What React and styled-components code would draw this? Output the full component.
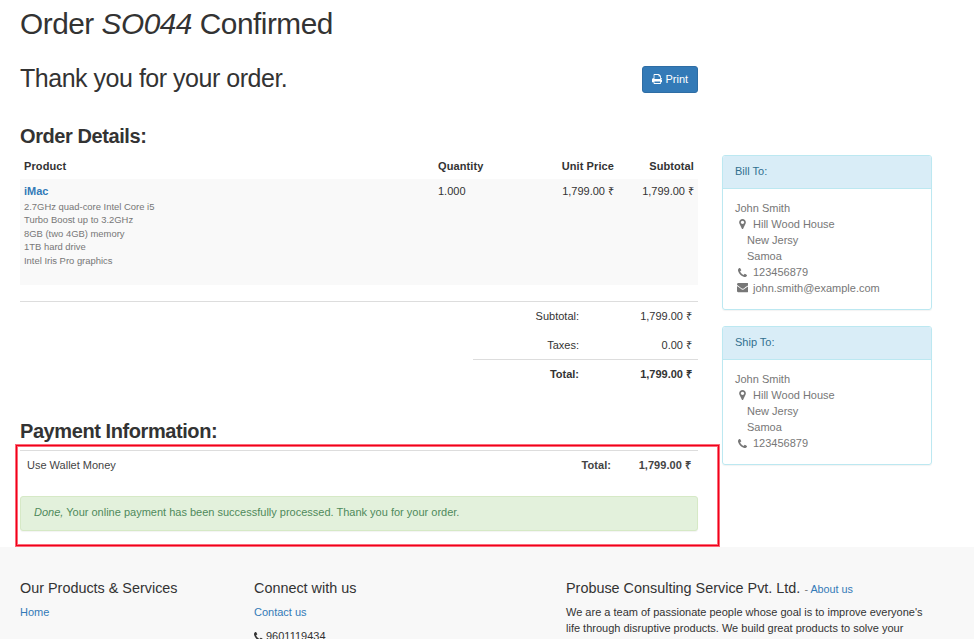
import React from "react";
import styled, { createGlobalStyle } from "styled-components";

const GlobalStyle = createGlobalStyle`
  * { box-sizing: border-box; }
  html, body { margin: 0; padding: 0; height: 639px; overflow: hidden; background: #fff; }
  body {
    font: 11px/16px "Liberation Sans", Arial, sans-serif;
    color: #333;
  }
  h1, h2, h3, h4, p, address { margin: 0; font-style: normal; }
  a { color: #337ab7; text-decoration: none; }
`;

const Page = styled.div`
  position: relative;
  width: 974px;
  height: 639px;
  overflow: hidden;
  display: flex;
  flex-direction: column;
`;

const Content = styled.main`
  height: 547px;
  flex: none;
  padding: 0 42px 0 20px;
`;

const Title = styled.h1`
  height: 48px;
  font-size: 29.8px;
  letter-spacing: -0.48px;
  line-height: 48px;
  font-weight: 400;
  white-space: nowrap;
`;

const Columns = styled.div`
  display: grid;
  grid-template-columns: 678px 210px;
  column-gap: 24px;
`;

const Thanks = styled.div`
  display: flex;
  justify-content: space-between;
  height: 75px;
  padding-top: 18px;
`;

const ThanksText = styled.h2`
  font-size: 25px;
  letter-spacing: -0.48px;
  line-height: 25px;
  font-weight: 400;
`;

const PrintButton = styled.button`
  display: flex;
  align-items: center;
  justify-content: center;
  gap: 3px;
  width: 56px;
  height: 27px;
  padding: 0 0 1px;
  border: 1px solid #2e6da4;
  border-radius: 3px;
  background: #337ab7;
  color: #fff;
  font: inherit;
`;

const SectionTitle = styled.h3`
  height: 26px;
  font-size: 20px;
  letter-spacing: -0.42px;
  line-height: 26px;
  font-weight: 700;
`;

const OrderTable = styled.div`
  margin-top: 4px;
`;

const OrderRow = styled.div`
  display: grid;
  grid-template-columns: 414px 80px 104px 80px;
  height: ${(p) => (p.$head ? 26 : 106)}px;
  padding-top: ${(p) => (p.$head ? 5 : 4)}px;
  background: ${(p) => (p.$head ? "transparent" : "#f9f9f9")};
  font-weight: ${(p) => (p.$head ? 700 : 400)};
  letter-spacing: ${(p) => (p.$head ? 0.1 : 0)}px;
`;

const Cell = styled.div`
  padding: 0 4px;
  text-align: ${(p) => (p.$right ? "right" : "left")};
`;

const ProductName = styled.a`
  display: block;
  font-weight: 700;
`;

const Specs = styled.div`
  color: #777;
  font-size: 9.44px;
  line-height: 13.6px;
  padding-top: 0.5px;
`;

const Totals = styled.div`
  margin-top: 16px;
  border-top: 1px solid #ddd;
  display: flex;
  flex-direction: column;
  align-items: flex-end;
  height: 117px;
`;

const TotalRow = styled.div`
  display: grid;
  grid-template-columns: 106px 113px;
  width: 225px;
  padding-right: 6px;
  height: ${(p) => p.$height || 29}px;
  line-height: 28px;
  text-align: right;
  border-top: ${(p) => (p.$sum ? "1px solid #ddd" : "0")};
  font-weight: ${(p) => (p.$sum ? 700 : 400)};
`;

const Payment = styled.div`
  display: grid;
  grid-template-columns: 1fr 100px 80px;
  margin-top: 6px;
  height: 46px;
  padding: 0 7px;
  border-top: 1px solid #ddd;
  line-height: 29px;
  color: #444;
`;

const Amount = styled.strong`
  text-align: right;
  letter-spacing: 0.05px;
`;

const Alert = styled.div`
  height: 35px;
  padding: 0 13px;
  border: 1px solid #d6e9c6;
  border-radius: 3px;
  background: #e3f1dc;
  color: #4f8a5b;
  line-height: 31px;
  box-shadow: 0 1px 1px rgba(0, 0, 0, 0.05);
`;

const Sidebar = styled.aside`
  padding-top: 107px;
  display: flex;
  flex-direction: column;
  gap: 16px;
`;

const Panel = styled.section`
  height: ${(p) => p.$height}px;
  border: 1px solid #bce8f1;
  border-radius: 3px;
  box-shadow: 0 1px 1px rgba(0, 0, 0, 0.05);
  overflow: hidden;
`;

const PanelHeading = styled.div`
  height: 33px;
  padding-left: 12px;
  background: #d9edf7;
  border-bottom: 1px solid #bce8f1;
  color: #31708f;
  line-height: 31px;
`;

const PanelBody = styled.address`
  padding: 11px 12px;
  color: #777;
`;

const AddressLine = styled.div`
  display: flex;
  align-items: center;
  height: 16px;
  padding-left: ${(p) => p.$indent || 0}px;
`;

const IconSlot = styled.span`
  display: flex;
  align-items: center;
  justify-content: center;
  width: 15px;
  margin-right: 3px;
`;

const Svg = styled.svg`
  display: block;
  flex: none;
  fill: currentColor;
`;

const Highlight = styled.div`
  position: absolute;
  left: 15px;
  top: 444px;
  width: 705px;
  height: 103px;
  border: 3px solid #fb6a78;
  &::after {
    content: "";
    position: absolute;
    inset: -2px;
    border: 1px solid #f0001a;
  }
`;

const Footer = styled.footer`
  flex: 1;
  display: grid;
  grid-template-columns: 234px 312px 366px;
  padding: 32px 20px 0;
  background: #f8f8f8;
`;

const FooterTitle = styled.h4`
  height: 25px;
  font-size: 14.4px;
  line-height: 18px;
  font-weight: 400;
  white-space: nowrap;
`;

const Small = styled.small`
  font-size: 10.8px;
  color: #777;
`;

const Phone = styled.div`
  display: flex;
  align-items: center;
  gap: 3px;
  margin-top: 8px;
`;

const Blurb = styled.p`
  white-space: nowrap;
`;

const icons = {
  phone: {
    box: "0 128 1408 1408",
    w: 9,
    h: 9,
    d: "M1408 1240q0 27-10 70.5t-21 68.5q-21 50-122 106-94 51-186 51-27 0-53-3.5t-57-12.5-47-14.5-55.5-20.5-49.5-18q-98-35-175-83-127-79-264-216t-216-264q-48-77-83-175-3-9-18-49.5t-20.5-55.5-14.5-47-12.5-57-3.5-53q0-92 51-186 56-101 106-122 25-11 68.5-21t70.5-10q14 0 21 3 18 6 53 76 11 19 30 54t35 63.5 31 53.5q3 4 17.5 25t21.5 35.5 7 28.5q0 20-28.5 50t-62 55-62 53-28.5 46q0 9 5 22.5t8.5 20.5 14 24 11.5 19q76 137 174 235t235 174q2 1 19 11.5t24 14 20.5 8.5 22.5 5q18 0 46-28.5t53-62 55-62 50-28.5q14 0 28.5 7t35.5 21.5 25 17.5q25 15 53.5 31t63.5 35 54 30q70 35 76 53 3 7 3 21z",
  },
  marker: {
    box: "384 128 1024 1536",
    w: 7,
    h: 10,
    d: "M1152 640q0-106-75-181t-181-75-181 75-75 181 75 181 181 75 181-75 75-181zm256 0q0 109-33 179l-364 774q-16 33-47.5 52t-67.5 19-67.5-19-46.5-52l-365-774q-33-70-33-179 0-212 150-362t362-150 362 150 150 362z",
  },
  envelope: {
    box: "0 256 1792 1408",
    w: 11.6,
    h: 9.2,
    d: "M1792 710v794q0 66-47 113t-113 47h-1472q-66 0-113-47t-47-113v-794q44 49 101 87 362 246 497 345 57 42 92.5 65.5t94.5 48 110 24.5h2q51 0 110-24.5t94.5-48 92.5-65.5q170-123 498-345 57-39 100-87zm0-294q0 79-49 151t-122 123q-376 261-468 325-10 7-42.5 31t-54 38.5-52 32.5-57.5 27-50 9h-2q-23 0-50-9t-57.5-27-52-32.5-54-38.5-42.5-31q-91-64-262-182.5t-205-142.5q-62-42-117-115.5t-55-136.5q0-78 41.5-130t118.5-52h1472q65 0 112.5 47t47.5 113z",
  },
  print: {
    box: "64 128 1664 1536",
    w: 10.6,
    h: 10,
    d: "M448 1536h896v-256h-896v256zm0-640h896v-384h-160q-40 0-68-28t-28-68v-160h-640v640zm1152 64q0-26-19-45t-45-19-45 19-19 45 19 45 45 19 45-19 19-45zm128 0v416q0 13-9.5 22.5t-22.5 9.5h-224v160q0 40-28 68t-68 28h-960q-40 0-68-28t-28-68v-160h-224q-13 0-22.5-9.5t-9.5-22.5v-416q0-79 56.5-135.5t135.5-56.5h64v-544q0-40 28-68t68-28h672q40 0 88 20t76 48l152 152q28 28 48 76t20 88v256h64q79 0 135.5 56.5t56.5 135.5z",
  },
};

function Icon({ name }) {
  const i = icons[name];
  return (
    <Svg width={i.w} height={i.h} viewBox={i.box} aria-hidden="true">
      <path d={i.d} />
    </Svg>
  );
}

function ContactLine({ icon, children }) {
  return (
    <AddressLine>
      <IconSlot><Icon name={icon} /></IconSlot>
      {children}
    </AddressLine>
  );
}

function AddressPanel({ title, email, height }) {
  return (
    <Panel $height={height}>
      <PanelHeading>{title}</PanelHeading>
      <PanelBody>
        <AddressLine>John Smith</AddressLine>
        <ContactLine icon="marker">Hill Wood House</ContactLine>
        <AddressLine $indent={12}>New Jersy</AddressLine>
        <AddressLine $indent={12}>Samoa</AddressLine>
        <ContactLine icon="phone">123456879</ContactLine>
        {email && <ContactLine icon="envelope">{email}</ContactLine>}
      </PanelBody>
    </Panel>
  );
}

const specs = [
  "2.7GHz quad-core Intel Core i5",
  "Turbo Boost up to 3.2GHz",
  "8GB (two 4GB) memory",
  "1TB hard drive",
  "Intel Iris Pro graphics",
];

export default function App() {
  return (
    <Page>
      <GlobalStyle />
      <Content>
        <Title>Order <em>SO044</em> Confirmed</Title>
        <Columns>
          <div>
            <Thanks>
              <ThanksText>Thank you for your order.</ThanksText>
              <PrintButton><Icon name="print" />Print</PrintButton>
            </Thanks>
            <SectionTitle>Order Details:</SectionTitle>
            <OrderTable>
              <OrderRow $head>
                <Cell>Product</Cell>
                <Cell>Quantity</Cell>
                <Cell $right>Unit Price</Cell>
                <Cell $right>Subtotal</Cell>
              </OrderRow>
              <OrderRow>
                <Cell>
                  <ProductName href="#">iMac</ProductName>
                  <Specs>{specs.map((s) => <div key={s}>{s}</div>)}</Specs>
                </Cell>
                <Cell>1.000</Cell>
                <Cell $right>1,799.00 ₹</Cell>
                <Cell $right>1,799.00 ₹</Cell>
              </OrderRow>
            </OrderTable>
            <Totals>
              <TotalRow><span>Subtotal:</span><span>1,799.00 ₹</span></TotalRow>
              <TotalRow $height={28}><span>Taxes:</span><span>0.00 ₹</span></TotalRow>
              <TotalRow $sum><span>Total:</span><span>1,799.00 ₹</span></TotalRow>
            </Totals>
            <SectionTitle>Payment Information:</SectionTitle>
            <Payment>
              <span>Use Wallet Money</span>
              <Amount>Total:</Amount>
              <Amount>1,799.00 ₹</Amount>
            </Payment>
            <Alert><em>Done,</em> Your online payment has been successfully processed. Thank you for your order.</Alert>
          </div>
          <Sidebar>
            <AddressPanel title="Bill To:" email="john.smith@example.com" height={155} />
            <AddressPanel title="Ship To:" height={139} />
          </Sidebar>
        </Columns>
      </Content>
      <Footer>
        <div>
          <FooterTitle>Our Products &amp; Services</FooterTitle>
          <a href="#">Home</a>
        </div>
        <div>
          <FooterTitle>Connect with us</FooterTitle>
          <a href="#">Contact us</a>
          <Phone><Icon name="phone" />9601119434</Phone>
        </div>
        <div>
          <FooterTitle>Probuse Consulting Service Pvt. Ltd. <Small>- <a href="#">About us</a></Small></FooterTitle>
          <Blurb>
            We are a team of passionate people whose goal is to improve everyone's
            <br />
            life through disruptive products. We build great products to solve your
          </Blurb>
        </div>
      </Footer>
      <Highlight />
    </Page>
  );
}
